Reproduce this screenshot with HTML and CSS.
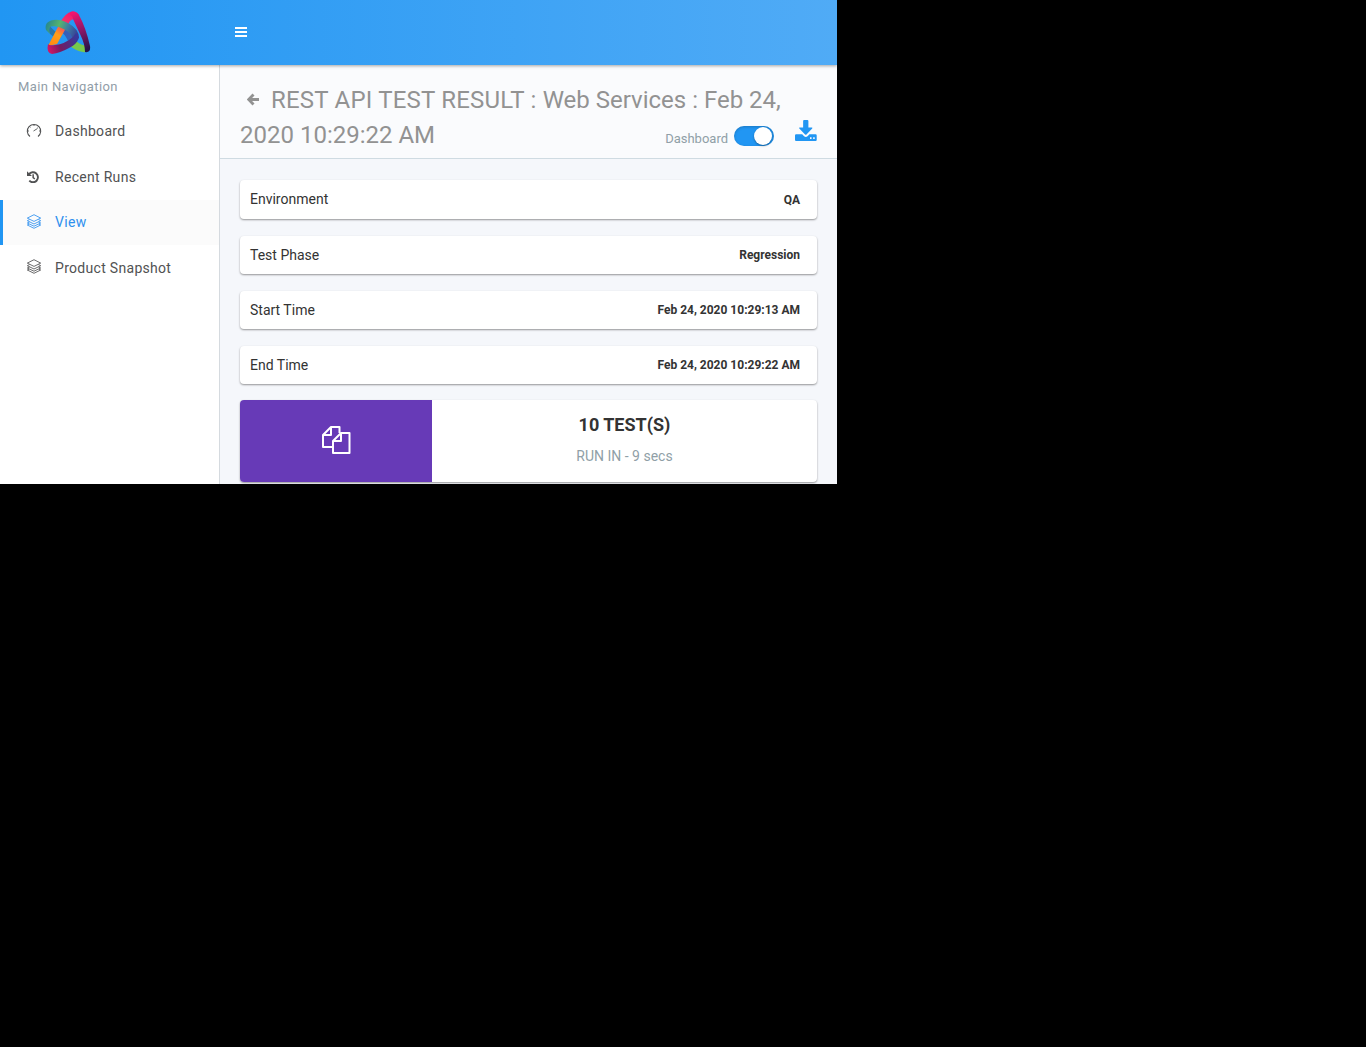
FILE: index.html
```html
<!DOCTYPE html>
<html lang="en">
<head>
<meta charset="utf-8">
<title>REST API Test Result</title>
<link rel="stylesheet" href="styles.css">
</head>
<body>
<svg class="defs" width="0" height="0">
  <symbol id="layers" viewBox="0 0 15 15">
    <g fill="none" stroke="currentColor" stroke-width=".85" stroke-linejoin="round">
      <path d="M7.500 .7 14.200 4.100 7.500 7.400.8 4.100z"/>
      <path d="M3 5.600.8 6.700 7.500 10 14.200 6.700 12 5.600"/>
      <path d="M3 8 .8 9 7.500 12.200 14.200 9 12 8"/>
      <path d="M2.500 10.200.8 11 7.500 14.300 14.200 11 12.500 10.200"/>
    </g>
  </symbol>
</svg>
<div class="app">
  <header class="topbar">
    <svg class="logo" width="46" height="44" viewBox="0 0 46 44">
      <defs>
        <linearGradient id="pink" gradientUnits="userSpaceOnUse" x1="6" y1="33" x2="28" y2="2"><stop offset="0" stop-color="#ff8a12"/><stop offset=".3" stop-color="#ff9e18"/><stop offset=".6" stop-color="#f43b68"/><stop offset="1" stop-color="#f5146c"/></linearGradient>
        <linearGradient id="dark" gradientUnits="userSpaceOnUse" x1="28" y1="2" x2="43" y2="38"><stop offset="0" stop-color="#f5146c"/><stop offset=".5" stop-color="#8a1766"/><stop offset="1" stop-color="#25134a"/></linearGradient>
        <linearGradient id="green" gradientUnits="userSpaceOnUse" x1="2" y1="14" x2="32" y2="26"><stop offset="0" stop-color="#2c8c8c"/><stop offset=".35" stop-color="#58b46c"/><stop offset=".65" stop-color="#3c7aa4"/><stop offset="1" stop-color="#373a92"/></linearGradient>
        <linearGradient id="base" gradientUnits="userSpaceOnUse" x1="3" y1="38" x2="32" y2="28"><stop offset="0" stop-color="#d51664"/><stop offset=".4" stop-color="#751b62"/><stop offset="1" stop-color="#37389a"/></linearGradient>
      </defs>
      <path fill="#76c84c" d="M25 35 31 30Q36 34 40 34.500L43 33 44 38Q42 42 38 41Q31 40 25 35z"/>
      <path fill="#2977aa" d="M1 15Q3 24 14 29L17 24Q8 20 5 15z"/>
      <path fill="#3560b8" d="M16 21 20 14Q30 18 31 27L23 30Q20 23 16 21z"/>
      <path fill="url(#pink)" d="M3 35 15 12Q20 2 27 .5Q31 0 34 4L30 9Q28 7 25 10L12 33z"/>
      <path fill="url(#green)" d="M1 19Q-1 12 6 9.500Q14 7 23 12Q34 18 34 27L27 31Q29 25 22 20Q13 14 6 15.500Q3 17 5 23z"/>
      <path fill="url(#dark)" d="M25 1Q31-1 34 4Q41 17 45 35Q46 42 40 41Q40 33 35 23L28 8Q28 5 25 4z"/>
      <path fill="url(#base)" d="M3 33Q4 35 10 34Q20 33 28 26L31 22Q34 24 33.500 28Q31 34 24 37Q15 42 7 43Q1 42 3 33z"/>
    </svg>
    <svg class="menu" width="12" height="10" viewBox="0 0 12 10"><path d="M0 0h12v2H0zM0 4h12v2H0zM0 8h12v2H0z" fill="#fff"/></svg>
  </header>
  <div class="body">
    <nav class="sidebar">
      <div class="nav-title">Main Navigation</div>
      <a class="nav-item">
        <svg width="16" height="15" viewBox="0 0 16 15"><path d="M4 13.500A6.700 6.700 0 1 1 12 13.500" fill="none" stroke="currentColor" stroke-width="1.100"/><path d="M7.500 8 11.500 5.500M1.500 8H3M14.500 8H13M8 1.500V3M3.400 3.400l1 1M12.600 3.400l-1 1" stroke="currentColor" stroke-width=".9"/></svg>
        <span>Dashboard</span></a>
      <a class="nav-item history">
        <svg width="12" height="12" viewBox="0 0 12 12"><path d="M2 3.200A5 5 0 1 1 2.300 9.700" fill="none" stroke="currentColor" stroke-width="1.900"/><path d="M0 .3 5 5H0zM5.400 3.200h1.500v3.100L8.300 7.400l-.9 1.200-2-1.500z" fill="currentColor"/></svg>
        <span>Recent Runs</span></a>
      <a class="nav-item active"><svg width="16" height="15"><use href="#layers"/></svg><span>View</span></a>
      <a class="nav-item"><svg width="16" height="15"><use href="#layers"/></svg><span>Product Snapshot</span></a>
    </nav>
    <main class="content">
      <div class="page-head">
        <h1><svg class="back" width="12" height="13" viewBox="0 0 12 13"><path d="M6.500 1.500 1.700 6.500 6.500 11.500M2 6.500H12" fill="none" stroke="currentColor" stroke-width="2.800"/></svg><span class="title-start">REST API TEST RESULT : </span>Web Services : Feb 24,<br>2020 10:29:22 AM</h1>
        <div class="tools">
          <span class="switch-label">Dashboard</span>
          <span class="switch"><i></i></span>
          <svg class="download" width="22" height="22" viewBox="0 0 23 22" preserveAspectRatio="none"><path fill="#2196f3" d="M8.500 1q0-1 1-1h3.500q1 0 1 1v6.500h3.500q1.200 0 .5 1l-6 6q-.8.700-1.500 0l-6-6q-.7-1 .5-1h3.500z"/><path fill="#2196f3" fill-rule="evenodd" d="M1.200 14.200H7.500l2 2q1.800 1.400 3.600 0l2-2H21.500q1.200 0 1.200 1.200V20q0 1-1.200 1H1.200Q0 21 0 20V15.400Q0 14.200 1.200 14.200zM15.700 17.300v1.600h1.600v-1.600zM19 17.300v1.600h1.600v-1.600z"/></svg>
        </div>
      </div>
      <div class="cards">
        <div class="card first"><span>Environment</span><b>QA</b></div>
        <div class="card"><span>Test Phase</span><b>Regression</b></div>
        <div class="card"><span>Start Time</span><b>Feb 24, 2020 10:29:13 AM</b></div>
        <div class="card"><span>End Time</span><b>Feb 24, 2020 10:29:22 AM</b></div>
        <div class="summary">
          <div class="summary-icon"><svg width="30" height="28" viewBox="0 0 30 28"><g fill="none" stroke="#fff" stroke-width="2" stroke-linejoin="round"><path d="M11 21H1V9L9 1H17.500V7M9 1V9H1"/><path d="M19 7H27.500V27H11V15zM19 7V15H11"/></g></svg></div>
          <div class="summary-text"><strong>10 TEST(S)</strong><span>RUN IN - 9 secs</span></div>
        </div>
      </div>
    </main>
  </div>
</div>
</body>
</html>
```
FILE: styles.css
```css
* { box-sizing: border-box; }
body { margin: 0; background: #000; font-family: Roboto, "Liberation Sans", sans-serif; font-size: 14px; color: #333; }
svg { display: block; flex: none; }
.defs { position: absolute; }
.app { width: 837px; height: 484px; overflow: hidden; display: flex; flex-direction: column; background: #f5f7fa; }
.topbar { position: relative; z-index: 1; height: 65px; flex: none; display: flex; align-items: flex-start; background: linear-gradient(90deg, #2196f3, #50abf6); box-shadow: 0 1px 3px rgba(0,0,0,.35); }
.logo { margin: 11px 0 0 45px; }
.menu { margin: 27px 0 0 144px; }
.body { display: flex; flex: 1; min-height: 0; }
.sidebar { width: 220px; flex: none; background: #fff; border-right: 1px solid #d5dadf; }
.nav-title { height: 43.500px; padding: 13px 18px 0; font-size: 13px; line-height: 17px; color: #919da8; letter-spacing: .38px; }
.nav-item { display: flex; align-items: center; height: 45.500px; padding-left: 23px; border-left: 3px solid transparent; color: #515253; letter-spacing: .3px; }
.nav-item svg { margin-right: 13px; margin-top: -2px; }
.nav-item.history svg { margin: 0 16px 0 1px; }
.nav-item.active { border-color: #2196f3; background: #fbfbfb; color: #2f90ee; }
.content { flex: 1; min-width: 0; background: #f5f7fb; }
.page-head { display: flex; justify-content: space-between; height: 94px; padding: 18px 20px 0; background: #fafbfd; border-bottom: 1px solid #cfdbe2; }
h1 { margin: 0; font-size: 24px; line-height: 35px; font-weight: 400; color: #929292; white-space: nowrap; }
.title-start { letter-spacing: .21px; }
.back { display: inline-block; margin: 0 12px 4px 7px; vertical-align: middle; }
.tools { display: flex; align-items: flex-start; margin-left: -130px; padding-top: 37px; }
.switch-label { margin-top: 10px; font-size: 13px; line-height: 17px; color: #909fa7; }
.switch { width: 40px; height: 20px; margin: 6px 21px 0 6px; padding: 1px 1px 0 20px; border-radius: 10px; background: #2196f3; box-shadow: inset 0 1px 3px rgba(0,0,0,.2); }
.switch i { display: block; width: 18px; height: 18px; border-radius: 50%; background: #fff; box-shadow: 0 1px 2px rgba(0,0,0,.35); }
.cards { padding: 21px 20px 0; display: flex; flex-direction: column; gap: 17px; }
.card { display: flex; justify-content: space-between; align-items: center; height: 38px; padding: 0 17px 0 10px; border-radius: 4px; background: #fff; box-shadow: 0 1px 2px rgba(0,0,0,.4); }
.card.first { height: 39px; }
.card.first span { margin-top: -1px; }
.card b { font-size: 12px; font-weight: 700; }
.summary { display: flex; height: 82px; margin-top: -1px; border-radius: 4px; overflow: hidden; background: #fff; box-shadow: 0 1px 2px rgba(0,0,0,.4); }
.summary-icon { display: flex; align-items: center; justify-content: center; width: 192px; padding: 0 0 2px 2px; background: #673ab7; }
.summary-text { flex: 1; display: flex; flex-direction: column; align-items: center; padding-top: 14px; }
.summary-text strong { font-size: 18px; line-height: 22px; }
.summary-text span { margin-top: 10px; line-height: 20px; color: #909fa7; }
```
